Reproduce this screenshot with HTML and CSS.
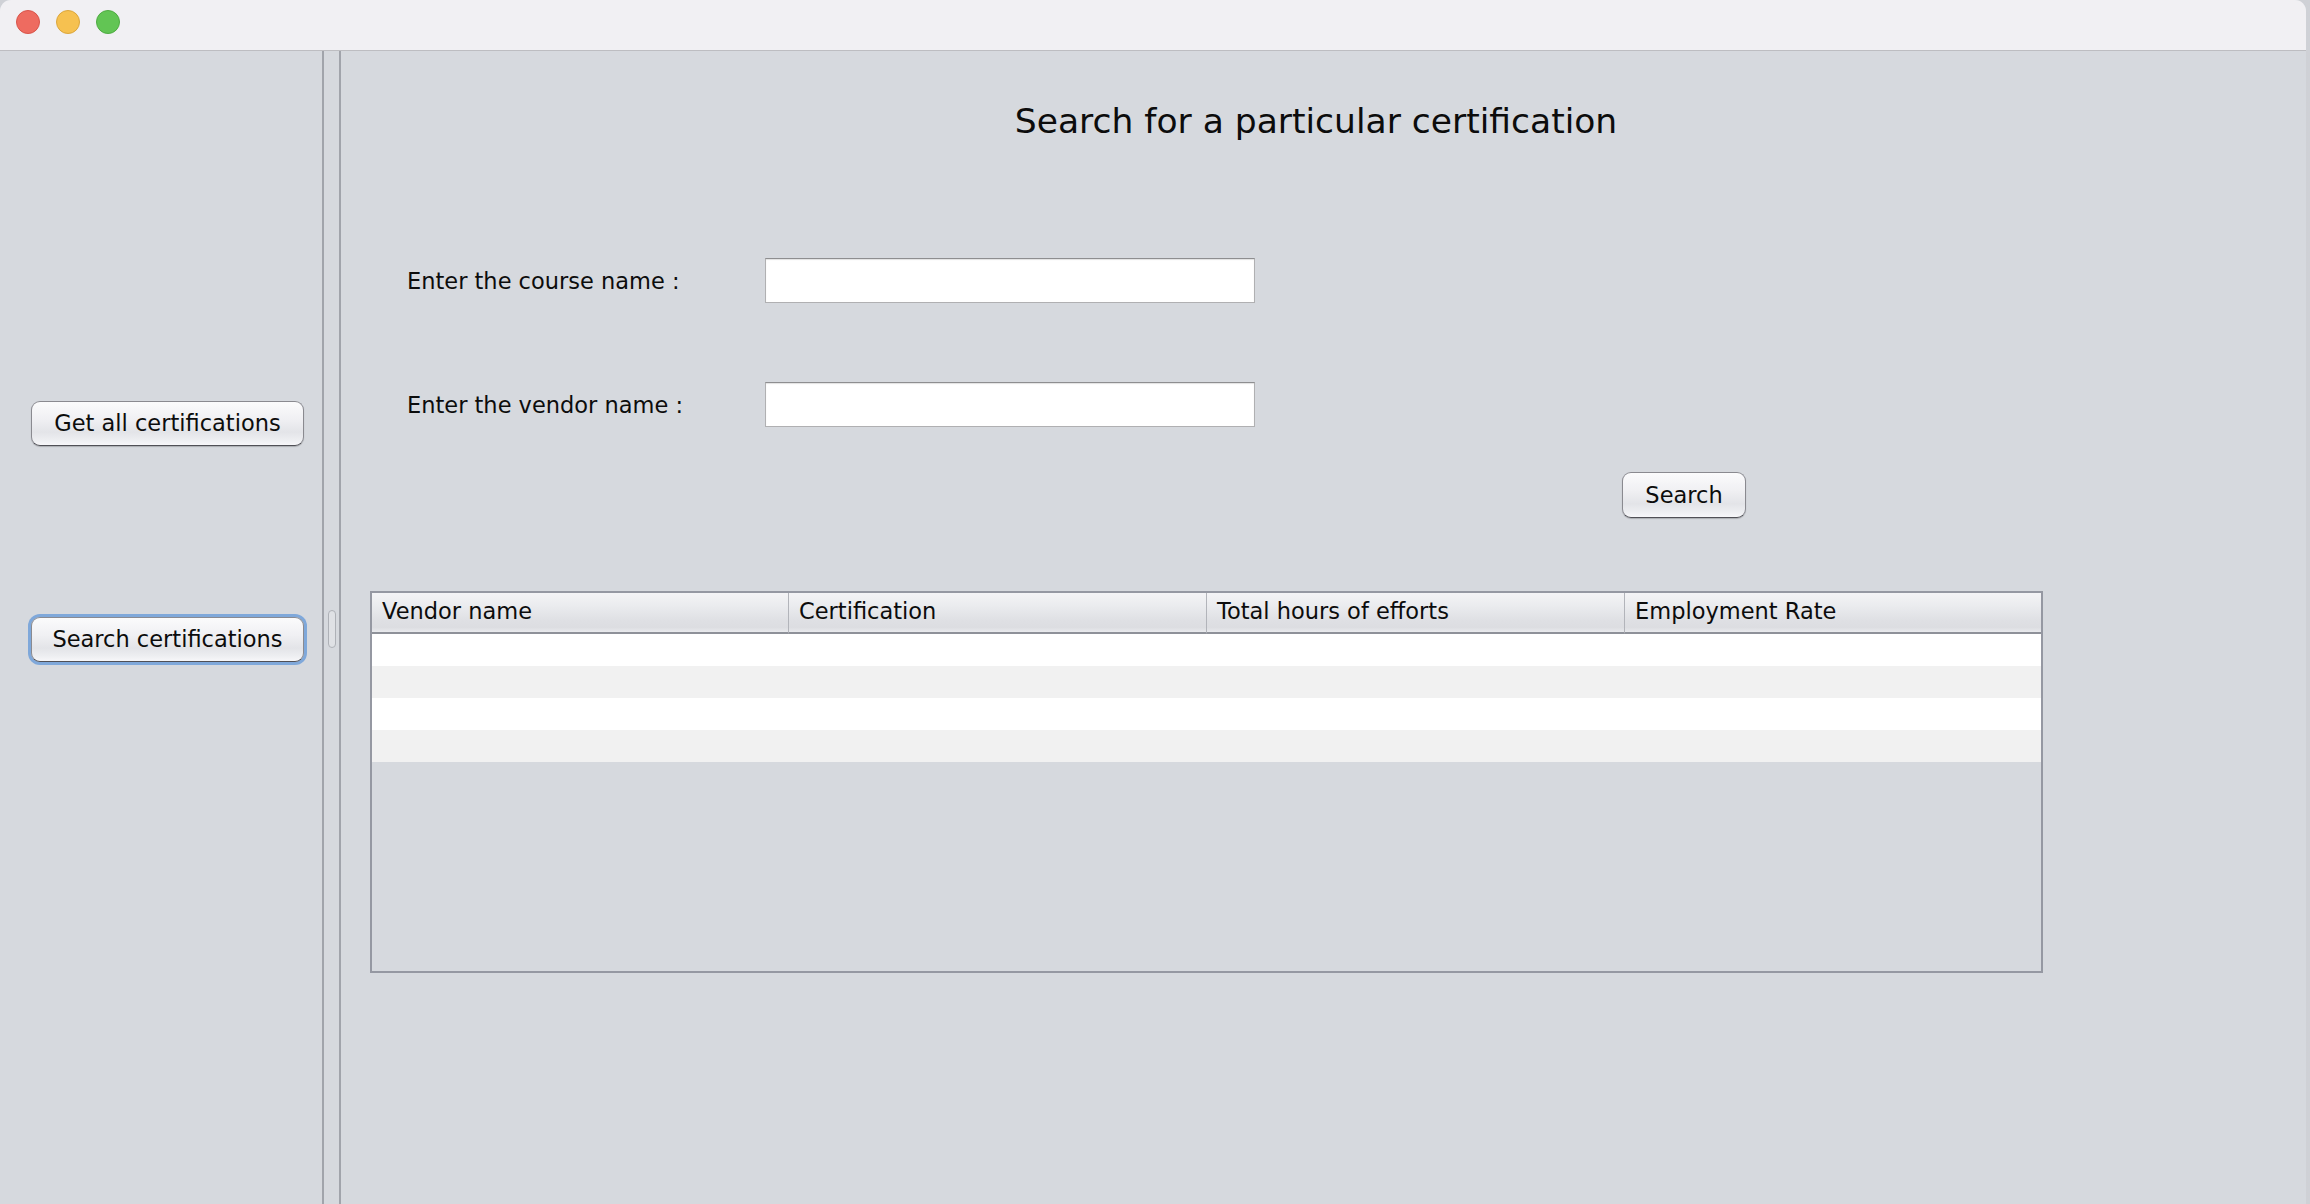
FILE: index.html
```html
<!DOCTYPE html>
<html lang="en">
<head>
<meta charset="utf-8">
<title>Search for a particular certification</title>
<link rel="stylesheet" href="styles.css">
</head>
<body>
<div class="window">
  <div class="titlebar">
    <span class="light red"></span>
    <span class="light yellow"></span>
    <span class="light green"></span>
  </div>
  <div class="content">
    <aside class="left-pane">
      <button class="aqua-btn nav-btn">Get all certifications</button>
      <button class="aqua-btn nav-btn focused">Search certifications</button>
    </aside>
    <div class="divider"><span class="grip"></span></div>
    <main class="right-pane">
      <h1 class="title">Search for a particular certification</h1>
      <div class="form">
        <div class="form-row">
          <label class="form-label" for="course">Enter the course name :</label>
          <input class="text-field" id="course" type="text">
        </div>
        <div class="form-row">
          <label class="form-label" for="vendor">Enter the vendor name :</label>
          <input class="text-field" id="vendor" type="text">
        </div>
      </div>
      <button class="aqua-btn search-btn">Search</button>
      <div class="table-wrap">
        <table class="data-table">
          <colgroup>
            <col class="col-a"><col class="col-b"><col class="col-c"><col>
          </colgroup>
          <thead>
            <tr>
              <th>Vendor name</th>
              <th>Certification</th>
              <th>Total hours of efforts</th>
              <th>Employment Rate</th>
            </tr>
          </thead>
          <tbody>
            <tr><td></td><td></td><td></td><td></td></tr>
            <tr><td></td><td></td><td></td><td></td></tr>
            <tr><td></td><td></td><td></td><td></td></tr>
            <tr><td></td><td></td><td></td><td></td></tr>
          </tbody>
        </table>
      </div>
    </main>
  </div>
</div>
</body>
</html>
```
FILE: styles.css
```css
* { box-sizing: border-box; }

html, body {
  margin: 0;
  padding: 0;
}

body {
  width: 2310px;
  height: 1204px;
  overflow: hidden;
  background: #cfd1d6;
  font-family: "DejaVu Sans", "Liberation Sans", sans-serif;
  font-size: 22.5px;
  color: #0c0c0c;
}

.window {
  width: 2306px;
  height: 1204px;
  border-radius: 11px 11px 0 0;
  overflow: hidden;
  display: flex;
  flex-direction: column;
  background: #d6d9de;
}

.titlebar {
  height: 51px;
  flex: none;
  background: #f1f0f3;
  border-bottom: 1px solid #bdbdc1;
  display: flex;
  align-items: flex-start;
  padding: 10px 0 0 16px;
  gap: 16px;
}

.light {
  width: 24px;
  height: 24px;
  border-radius: 50%;
  display: block;
}
.light.red { background: #ee6b60; border: 1px solid #d8544a; }
.light.yellow { background: #f6c150; border: 1px solid #dba63c; }
.light.green { background: #62c554; border: 1px solid #4fab42; }

.content {
  flex: 1;
  display: flex;
  background: #d6d9de;
}

.left-pane {
  width: 322px;
  flex: none;
  display: flex;
  flex-direction: column;
  align-items: flex-start;
  padding: 350px 0 0 31px;
  gap: 171px;
}

.aqua-btn {
  font-family: "DejaVu Sans", "Liberation Sans", sans-serif;
  font-size: 22.5px;
  color: #0c0c0c;
  border: 1.5px solid #8a8a90;
  border-bottom-color: #505056;
  border-radius: 9px;
  background: linear-gradient(#fbfbfc 0%, #f0f0f3 40%, #e3e4e8 70%, #edeef1 88%, #f7f7f9 100%);
  box-shadow: 0 1px 1px rgba(0, 0, 0, 0.2);
  padding: 0;
  line-height: 1;
}

.nav-btn {
  width: 273px;
  height: 45px;
}

.nav-btn.focused {
  box-shadow: 0 0 0 3px #7fa8da, 0 1px 1px rgba(0, 0, 0, 0.2);
}

.divider {
  width: 19px;
  flex: none;
  border-left: 2px solid #a1a4ab;
  border-right: 2px solid #a1a4ab;
  padding: 559px 0 0 4px;
}

.grip {
  display: block;
  width: 8px;
  height: 38px;
  border: 1.5px solid #aeb1b7;
  border-radius: 4px;
  background: #dfe1e5;
}

.right-pane {
  flex: 1;
  display: flex;
  flex-direction: column;
  align-items: flex-start;
  padding-left: 29px;
}

.title {
  align-self: stretch;
  margin: 50px 0 0 0;
  padding-right: 44px;
  font-size: 34.5px;
  font-weight: normal;
  line-height: 40px;
  text-align: center;
  color: #0c0c0c;
}

.form {
  margin-top: 117px;
  display: flex;
  flex-direction: column;
  gap: 79px;
  padding-left: 37px;
}

.form-row {
  display: flex;
  align-items: center;
  height: 45px;
}

.form-label {
  width: 358px;
  flex: none;
}

.text-field {
  width: 490px;
  height: 45px;
  margin: 0;
  border: 1px solid #b0b0b2;
  border-top-color: #8e8e90;
  background: #fff;
  box-shadow: inset 0 1px 1px rgba(0, 0, 0, 0.12);
  font-family: inherit;
  font-size: inherit;
}

.search-btn {
  margin: 45px 0 0 1252px;
  width: 124px;
  height: 46px;
}

.table-wrap {
  margin-top: 73px;
  width: 1673px;
  height: 382px;
  border: 2px solid #9598a2;
}

.data-table {
  width: 100%;
  border-collapse: separate;
  border-spacing: 0;
  table-layout: fixed;
}

.col-a { width: 417px; }
.col-b { width: 418px; }
.col-c { width: 418px; }

.data-table th {
  height: 41px;
  padding: 0 10px 3px 10px;
  text-align: left;
  font-weight: normal;
  font-size: 22.5px;
  color: #0c0c0c;
  background: linear-gradient(#f4f4f6 0%, #eaebee 35%, #dfe0e4 70%, #dcdde1 88%, #e9eaed 100%);
  border-bottom: 2px solid #8e9199;
  border-right: 1px solid #b2b4ba;
  white-space: nowrap;
}

.data-table th:last-child {
  border-right: none;
}

.data-table td {
  height: 32px;
  padding: 0;
  background: #ffffff;
}

.data-table tbody tr:nth-child(even) td {
  background: #f1f1f1;
}
```
